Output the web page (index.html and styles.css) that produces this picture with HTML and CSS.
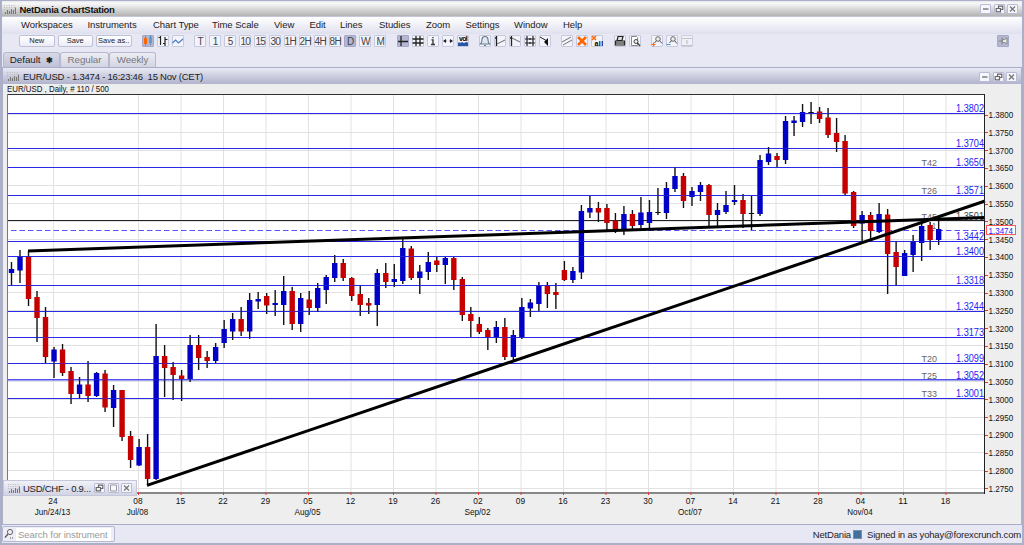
FILE: index.html
```
<!DOCTYPE html>
<html lang="en">
<head>
<meta charset="utf-8">
<title>NetDania ChartStation</title>
<link rel="stylesheet" href="styles.css">
</head>
<body>
<svg width="0" height="0" class="defs">
  <symbol id="logo" viewBox="0 0 12 9"><path d="M0 .5h12M0 2.5h12M0 4.5h12" stroke="#bbb" stroke-dasharray="1 1.4"/><path d="M1.5 9V7M3.5 9V5M5.5 9V6M7.5 9V4M9.5 9V5M11.5 9V2.5" stroke="#777" stroke-width="1.1"/></symbol>
  <symbol id="min" viewBox="1 1 9 8"><path d="M3 5h5.5" stroke="#777" stroke-width="1.4"/></symbol>
  <symbol id="rest" viewBox="1 1 9 8"><path d="M4.500 4V2.200h4.300v3.300H7M2.200 4.500h4.300v3.300H2.200z" fill="none" stroke="#666" stroke-width="1.200"/></symbol>
  <symbol id="max" viewBox="1 1 9 8"><path d="M2.500 2h6v6h-6z" fill="none" stroke="#999"/></symbol>
  <symbol id="close" viewBox="1 1 9 8"><path d="M3 2.500l5 5M8 2.500l-5 5" stroke="#777" stroke-width="1.300"/></symbol>
</svg>
<div class="app">
  <header class="titlebar">
    <svg class="logo"><use href="#logo"/></svg>
    <span class="apptitle">NetDania ChartStation</span>
    <span class="winbtns"><svg><use href="#min"/></svg><svg><use href="#rest"/></svg><svg><use href="#close"/></svg></span>
  </header>
  <nav class="menu">
    <span>Workspaces</span><span>Instruments</span><span>Chart Type</span><span>Time Scale</span><span>View</span><span>Edit</span><span>Lines</span><span>Studies</span><span>Zoom</span><span>Settings</span><span>Window</span><span>Help</span>
  </nav>
  <div class="toolbar">
    <div class="group files"><b>New</b><b>Save</b><b>Save as..</b></div>
    <div class="group">
      <i class="on"><svg viewBox="0 0 12 12"><path d="M3.5 1v10" stroke="#f60"/><path d="M2 3h3v6H2z" fill="#f60"/><path d="M8.5 0v10" stroke="#58a"/><path d="M7 2h3v6H7z" fill="#69c"/></svg></i>
      <i><svg viewBox="0 0 12 12"><path d="M1.5 2.5h2v7M3.5 1v9M6 8.5h2M8 2v9M8 4.500h2.500" fill="none" stroke="#222" stroke-width="1.200"/></svg></i>
      <i><svg viewBox="0 0 12 12"><path d="M.5 8L3.500 5l3 3 4.500-4" fill="none" stroke="#4a7ac8" stroke-width="1.200"/></svg></i>
    </div>
    <div class="group times"><i>T</i><i>1</i><i>5</i><i>10</i><i>15</i><i>30</i><i>1H</i><i>2H</i><i>4H</i><i>8H</i><i class="on">D</i><i>W</i><i>M</i></div>
    <div class="group">
      <i class="on"><svg viewBox="0 0 12 12"><path d="M4 1v10M1 6.500h10" stroke="#222" stroke-width="1.300"/></svg></i>
      <i><svg viewBox="0 0 12 12"><path d="M4 1v10M8 1v10M.5 4h11M.5 8h11" stroke="#222" stroke-width="1.300"/></svg></i>
      <i><svg viewBox="0 0 12 12"><path d="M6 2v1.300M4.500 4.800H6V9.500M4 9.500h4" fill="none" stroke="#333" stroke-width="1.300"/></svg></i>
      <i><svg viewBox="0 0 12 12"><path d="M1 6l3-2v4zM11 6L8 4v4z" fill="#222"/><path d="M2 6h2.500M7.500 6H10" stroke="#222" stroke-width="1.200"/></svg></i>
      <i><svg viewBox="0 0 12 12"><path d="M1 11V8l1-1 1 1 2-1 2 1 2-1 2 .5V11z" fill="#2856a8"/><text x="6" y="5.500" font-size="7" font-weight="bold" text-anchor="middle">vol</text></svg></i>
    </div>
    <div class="group">
      <i><svg viewBox="0 0 12 12"><path d="M1.500 9Q3 7.500 3 4.500Q3 1.500 6 1.500T9 4.500Q9 7.500 10.500 9zM5 10.500h2" fill="#dde8f4" stroke="#678" stroke-width="1.100"/></svg></i>
      <i><svg viewBox="0 0 12 12"><path d="M2.500 1v10M1 3h2" stroke="#222" stroke-width="1.300"/><path d="M3 9L11 5" stroke="#666"/></svg></i>
      <i><svg viewBox="0 0 12 12"><path d="M2.500 1v10M1 3h2" stroke="#222" stroke-width="1.300"/><path d="M3 3l8 4" stroke="#666"/></svg></i>
      <i><svg viewBox="0 0 12 12"><path d="M3 1v10M9 1v10M1 4h10M1 8h10M6 3v2M6 7v2" stroke="#222" stroke-width="1.200"/></svg></i>
      <i><svg viewBox="0 0 12 12"><path d="M1 2l7 4" stroke="#222"/><path d="M5 7l4-4v8z" fill="#111"/></svg></i>
    </div>
    <div class="group">
      <i><svg viewBox="0 0 12 12"><path d="M1 7l9-5M2 10l9-5" stroke="#777"/></svg></i>
      <i><svg viewBox="0 0 12 12"><path d="M2 2l8 8M10 2l-8 8" stroke="#f60" stroke-width="2.600"/></svg></i>
      <i><svg viewBox="0 0 12 12"><path d="M1 1l4 4M5 1L1 5" stroke="#f60" stroke-width="1.500"/><text x="3.500" y="11" font-size="7" font-weight="bold" textLength="8">all</text></svg></i>
    </div>
    <div class="group">
      <i><svg viewBox="0 0 12 12"><path d="M4 1.500h5l-1 4H3zM1.500 6h9v4h-9zM2 8h8" fill="#ddd" stroke="#222" stroke-width="1.200"/></svg></i>
      <i><svg viewBox="0 0 12 12"><path d="M2.500 1.500h5l1 1v8h-6z" fill="#fff" stroke="#888"/><circle cx="7" cy="6.500" r="2" fill="#eee" stroke="#444"/><path d="M8.500 8l2.500 3" stroke="#444" stroke-width="1.300"/></svg></i>
    </div>
    <div class="group">
      <i><svg viewBox="0 0 12 12"><circle cx="7" cy="4" r="2.300" fill="#eee" stroke="#666"/><path d="M8.500 5.500L11 8.500M5.500 5.500L3.500 8" stroke="#555"/><path d="M.5 9.500h4M2.500 7.500v4" stroke="#f60" stroke-width="1.200"/></svg></i>
      <i><svg viewBox="0 0 12 12"><circle cx="7" cy="4" r="2.300" fill="#eee" stroke="#666"/><path d="M8.500 5.500L11 8.500M5.500 5.500L3.500 8" stroke="#555"/><path d="M.5 9.500h4" stroke="#49c"/></svg></i>
      <i class="off"><svg viewBox="0 0 12 12"><path d="M1 3.500h10M1 10.500h10" stroke="#bbb"/><path d="M4.500 6.500l1.500-1.500 1.500 1.500zM4.500 7.500l1.500 1.500 1.500-1.500z" fill="#aaa"/></svg></i>
    </div>
    <i class="pin on"><svg viewBox="0 0 12 12"><path d="M1.500 6H5M5 2.500v7" stroke="#888" stroke-width="1.200"/><path d="M5.500 4.500h2L10 3v6L7.500 7.500h-2z" fill="#e8e8e8" stroke="#888"/></svg></i>
  </div>
  <div class="tabs"><span class="tab active">Default <b>✱</b></span><span class="tab">Regular</span><span class="tab">Weekly</span></div>
  <main class="chartwin">
    <div class="charttitle">
      <svg class="logo"><use href="#logo"/></svg>
      <span class="pair">EUR/USD - 1.3474 - 16:23:46 &nbsp;15 Nov (CET)</span>
      <span class="winbtns"><svg><use href="#min"/></svg><svg><use href="#rest"/></svg><svg><use href="#close"/></svg></span>
    </div>
    <svg class="chart" id="chart" viewBox="3 84 1017 440"></svg>
    <div class="minimized">
      <svg class="logo"><use href="#logo"/></svg><span>USD/CHF - 0.9...</span>
      <span class="winbtns"><svg><use href="#rest"/></svg><svg><use href="#max"/></svg><svg><use href="#close"/></svg></span>
    </div>
  </main>
  <footer class="status">
    <div class="search"><svg viewBox="0 0 11 12"><circle cx="6" cy="4" r="2.600" fill="none" stroke="#666"/><path d="M4 6L1 9.500M6 10h1M8 10h1" stroke="#555" stroke-width="1.200"/></svg><span>Search for instrument</span></div>
    <div class="account"><span class="brand">NetDania</span><span class="led"></span><span class="signed">Signed in as yohay@forexcrunch.com</span></div>
  </footer>
</div>
<script src="chart.js"></script>
</body>
</html>
```
FILE: styles.css
```
* { box-sizing: border-box; }
body { margin: 0; background: #abafc8; font-family: "Liberation Sans", Arial, sans-serif; color: #333; overflow: hidden; }
.defs { display: block; position: absolute; }
svg { display: block; flex: none; }
.app { width: 1024px; height: 545px; padding: 1px 2px 2px; display: flex; flex-direction: column; }
.logo { width: 12px; height: 9px; }
.titlebar { height: 16px; flex: none; display: flex; align-items: center; padding: 1px 4px 0 2px; background: linear-gradient(#e8e8ee, #f8f8f8 15%, #b3b3b3); border-bottom: 1px solid #c5c7d8; }
.apptitle { font-size: 9.500px; font-weight: bold; color: #111; margin-left: 3.500px; letter-spacing: -.27px; }
.winbtns { display: flex; gap: 2.500px; margin-left: auto; }
.winbtns svg { width: 11px; height: 10px; background: #f6f6fd; border: 1px solid #b9bbd6; border-radius: 1px; }
.menu { height: 17px; flex: none; padding: 0 0 2px 19px; display: grid; grid-template-columns: 66.500px 65.500px 59px 62px 35.500px 30.500px 39px 47px 39.500px 48.500px 49px 40px; align-items: center; background: linear-gradient(#fff, #dfe0ee); font-size: 9.500px; letter-spacing: -.05px; color: #222; white-space: nowrap; }
.toolbar { height: 17px; flex: none; display: flex; align-items: center; gap: 10.400px; background: #e8e8f4; padding: 0 13px 3px 17px; }
.group { display: flex; gap: 3px; }
.toolbar i { width: 12px; height: 12px; display: flex; align-items: center; justify-content: center; font-style: normal; font-size: 10px; color: #444; background: #f3f3fb; border: 1px solid #c6c8dc; border-radius: 1px; letter-spacing: -.7px; white-space: nowrap; }
.toolbar i.on { background: #b5b7d2; border-color: #a5a8c5; }
.toolbar i.off { opacity: .8; }
.toolbar i svg { width: 12px; height: 12px; }
.files b { width: 35.500px; height: 12px; font-weight: normal; font-size: 7.500px; line-height: 10px; text-align: center; color: #222; background: linear-gradient(#fff, #ececf8); border: 1px solid #bfc1d7; border-radius: 2px; white-space: nowrap; }
.toolbar .pin { margin-left: auto; }
.tabs { height: 17px; flex: none; display: flex; align-items: flex-end; padding-left: 1px; background: #e8e8f4; border-bottom: 1px solid #a8aec8; font-size: 9.800px; letter-spacing: -.05px; }
.tab { height: 15px; line-height: 14px; width: 49px; text-align: center; color: #777; background: linear-gradient(#ededf4, #d3d4e2); border: 1px solid #b5b8ce; border-bottom: 0; border-radius: 3px 3px 0 0; }
.tab.active { width: 57px; color: #222; background: linear-gradient(#d8d9e8, #bfc1d8); white-space: nowrap; }
.tab b { margin-left: 3px; font-size: 8px; }
.tab:last-child { width: 47px; }
.chartwin { position: relative; flex: none; width: 1018px; height: 456px; margin-left: 1px; background: #eee; }
.charttitle { height: 16px; display: flex; align-items: center; padding: 1px 4px 0; background: linear-gradient(#e9eaf4, #b0b3cc); }
.pair { font-size: 9.500px; letter-spacing: -.22px; margin-left: 4px; color: #222; }
.chart { width: 1017px; height: 440px; }
.chart text, .toolbar text { font-family: "Liberation Sans", Arial, sans-serif; }
.minimized { position: absolute; left: 0; bottom: 28px; width: 134px; height: 16px; display: flex; align-items: center; padding: 0 4px; font-size: 9.500px; letter-spacing: -.25px; color: #222; background: linear-gradient(#f1f1f8, #d3d4e4); border: 1px solid #c4c6da; white-space: nowrap; }
.minimized span:not(.winbtns) { margin-left: 3px; }
.status { flex: 1; min-height: 0; display: flex; align-items: center; justify-content: space-between; background: #e8e8f4; border-top: 1px solid #a8aec8; font-size: 9.500px; }
.search { display: flex; align-items: center; width: 113px; height: 16px; background: #ededf8; border: 1px solid #b5b8d0; border-radius: 2px; padding-left: 1px; }
.search svg { width: 11px; height: 12px; }
.search span { height: 13px; line-height: 13px; margin-left: 1px; padding-left: 2px; width: 95px; background: #fff; color: #999; letter-spacing: -.06px; white-space: nowrap; }
.account { display: flex; align-items: center; white-space: nowrap; color: #222; letter-spacing: -.18px; padding-right: 1px; }
.led { width: 9px; height: 9px; margin: 0 5px 0 2px; background: #436f9d; border: 1px solid #7590b0; }
```
FILE: chart.js
```
const svg = document.getElementById('chart');
const out = [];
const rect = (x, y, w, h, f) => out.push(`<rect x="${x}" y="${y}" width="${w}" height="${h}" fill="${f}"/>`);
const line = (a, b, c, d, s, w = 1, extra = '') => out.push(`<line x1="${a}" y1="${b}" x2="${c}" y2="${d}" stroke="${s}" stroke-width="${w}" ${extra}/>`);
const text = (x, y, t, f, len, size = 9.5, anchor = 'start') => out.push(`<text x="${x}" y="${y}" fill="${f}" font-size="${size}" text-anchor="${anchor}" textLength="${len}" lengthAdjust="spacingAndGlyphs">${t}</text>`);

text(7, 92, 'EUR/USD , Daily, # 110 / 500', '#111', 102, 8.5);
rect(7, 95, 977, 398, '#fff');

// weekly ticks; the blank entry is a week without a label or grid line
const days = ['24', '', '08', '15', '22', '29', '05', '12', '19', '26', '02', '09', '16', '23', '30', '07', '14', '21', '28', '04', '11', '18'];
days.forEach((d, i) => {
  if (d) line(53.5 + i * 42.5, 95, 53.5 + i * 42.5, 492, '#e2e2e2');
});
for (let i = 0; i < 22; i++) {
  const y = Math.round(114 + i * 17.8) + 0.5;
  line(8, y, 984, y, '#e2e2e2');
}

const levels = [[113.5, '1.3802'], [148.5, '1.3704'], [167.5, '1.3650', 'T42'], [195.5, '1.3571', 'T26'], [241.5, '1.3442'], [256.5, '1.3400'], [285.5, '1.3318'], [311.5, '1.3244'], [337.5, '1.3173'], [363.5, '1.3099', 'T20'], [379.8, '1.3052', 'T25'], [398.5, '1.3001', 'T33']];
levels.forEach(([y]) => line(7, y, 984, y, '#2929e8'));
line(7, 220.5, 984, 220.5, '#222');
line(11, 230.5, 984, 230.5, '#5555ff', 1, 'stroke-dasharray="5.5 3"');

// wick top, body top, body bottom, wick bottom, colour
const candles = `262 269 273 285 B|250 257 270.5 283 B|251 257 299 306 R|291 297 318 342 R|307 317 357 363 R|347 349.5 361.5 378 B|344 349.5 373 376 R|367 371 394 404 R|377 384.5 394 398 B|361 384.5 396 402 R|372 373 396 397 B|370 373.5 407.5 412 R|385 390 408 427 B|390 390 437 441 R|431 436 460 468 R|439 447 465.5 466 B|434 447 479 484 R|324 356 479 480 B|345 356 368 397 R|362 367 375 400 R|370 375.5 379 401 R|335 345 379 382 B|335 345 358 370 R|351 357 361 368 R|343 347 361 363 B|320 329 343 348 B|313 319 331.5 340 B|307 319 331.5 336 R|293 300 331.5 339 B|292 299 301.5 309 B|293 296 305.5 314 R|290 303 305 316 B|276 291 305 325 B|287 291 324 330 R|293 298 324 332 B|291 299.5 308 315 R|283 288 308 312 B|275 277 290 304 B|255 263 278 282 B|259 263 278 281 R|277 278 296 301 R|286 294 305 316 R|298 303 305.5 314 R|269 273 305 326 B|263 273 282 288 R|264 279 282 287 B|239 248 281 284 B|246 248.5 278 280 R|265 271.5 278 294 B|252 262 272 280 B|257 260.5 265 272 R|257 258 265 284 B|257 258 280 290 R|277 279 315 321 R|307 314 321 337 R|317 324 332 334 R|328 330 337 350 R|321 327 337 343 B|318 327 357 360 R|330 335 357 362 B|298 307 337 339 B|299 302.5 308.5 317 B|282 286 304 311 B|282 286 294 308 R|283 292 295 309 R|261 270 280 281 R|267 271 280 283 B|205 211 272.5 279 B|196 208 212.5 218 B|202 208 212.5 222 R|204 208 223 231 R|213 220.5 229 233 R|206 214 229 235 B|210 214 226 230 R|197 212.5 225 228 B|200 212 223 228 B|188 212 213 215 K|182 188 213 219 B|167 176 189 192 B|173 176 201 208 R|187 191 197 206 B|182 185 192 201 B|184 185 215 228 R|203 210 215 228 B|191 205 212 214 B|185 200 202 205 B|194 200 214 228 R|196 213 214 230 K|155 160 214 216 B|147 153.5 162 165 B|153 156 160 167 R|116 121 160 164 B|116 120.5 123 136 B|104 112 122 127 B|102 112 113 124 K|107 111.5 119 123 R|108 117.5 135 138 R|118 133 142 152 R|135 141 193.5 195 R|191 192 226 228 R|211 215 223.5 242 B|212 215 231 240 R|203 214 232 233 B|209 214.5 254 294 R|241 252 267 286 R|250 253 276 276 B|235 241 255 272 B|222 226 243 261 B|222 225 240 250 R|220 229 240 245 B`;
const fills = { B: '#0000c6', R: '#c60000', K: '#111' };
candles.split('|').forEach((c, i) => {
  const [wt, bt, bb, wb, k] = c.split(' ');
  const x = 11.5 + i * 8.506;
  line(x, wt, x, wb, '#111', 1.4);
  rect(x - 2.7, bt, 5.4, bb - bt, fills[k]);
});
levels.forEach(([y]) => line(7, y, 984, y, '#2929e8', 1, 'stroke-opacity=".55"'));

levels.forEach(([y, v, t]) => {
  text(956, y - 1.3, v, '#2424f0', 28, 10);
  if (t) text(921.5, y - 1.3, t, '#666', 15.5);
});
text(921.5, 219.5, 'T45', '#666', 15.5);
text(956, 219.5, '1.3501', '#444', 28, 10);
text(932, 229, '1', '#555', 4);

line(28, 251, 985, 217.5, '#000', 3);
line(147, 485.3, 985, 201, '#000', 3);

line(7, 94.5, 985, 94.5, '#333');
line(7.5, 94, 7.5, 494, '#777');
line(7, 493, 985, 493, '#888', 2);
line(984.5, 94, 984.5, 494, '#222');
for (let i = 0; i < 22; i++) {
  const y = 114.5 + i * 17.8;
  line(985, Math.round(y) + 0.5, 988, Math.round(y) + 0.5, '#e33');
  text(988.5, y + 3.5, (1.38 - i * 0.005).toFixed(4), '#111', 24.7, 9.5);
}
days.forEach((d, i) => {
  if (d) line(53.5 + i * 42.5, 492, 53.5 + i * 42.5, 495, '#e33');
});
out.push('<rect x="986.5" y="225.5" width="29" height="9" fill="#fff" stroke="#f55"/>');
text(988.5, 233.5, '1.3474', '#22f', 24.5, 9.5);

const months = { 0: ['Jun/24/13', 35.5], 2: ['Jul/08', 21.5], 6: ['Aug/05', 26], 10: ['Sep/02', 26], 15: ['Oct/07', 24], 19: ['Nov/04', 25.5] };
days.forEach((d, i) => {
  if (!d) return;
  const x = 53 + i * 42.5;
  text(x, 504, d, '#111', 9.3, 9, 'middle');
  if (months[i]) text(x - 0.5, 515, months[i][0], '#111', months[i][1], 8.7, 'middle');
});
svg.innerHTML = out.join('');
```
